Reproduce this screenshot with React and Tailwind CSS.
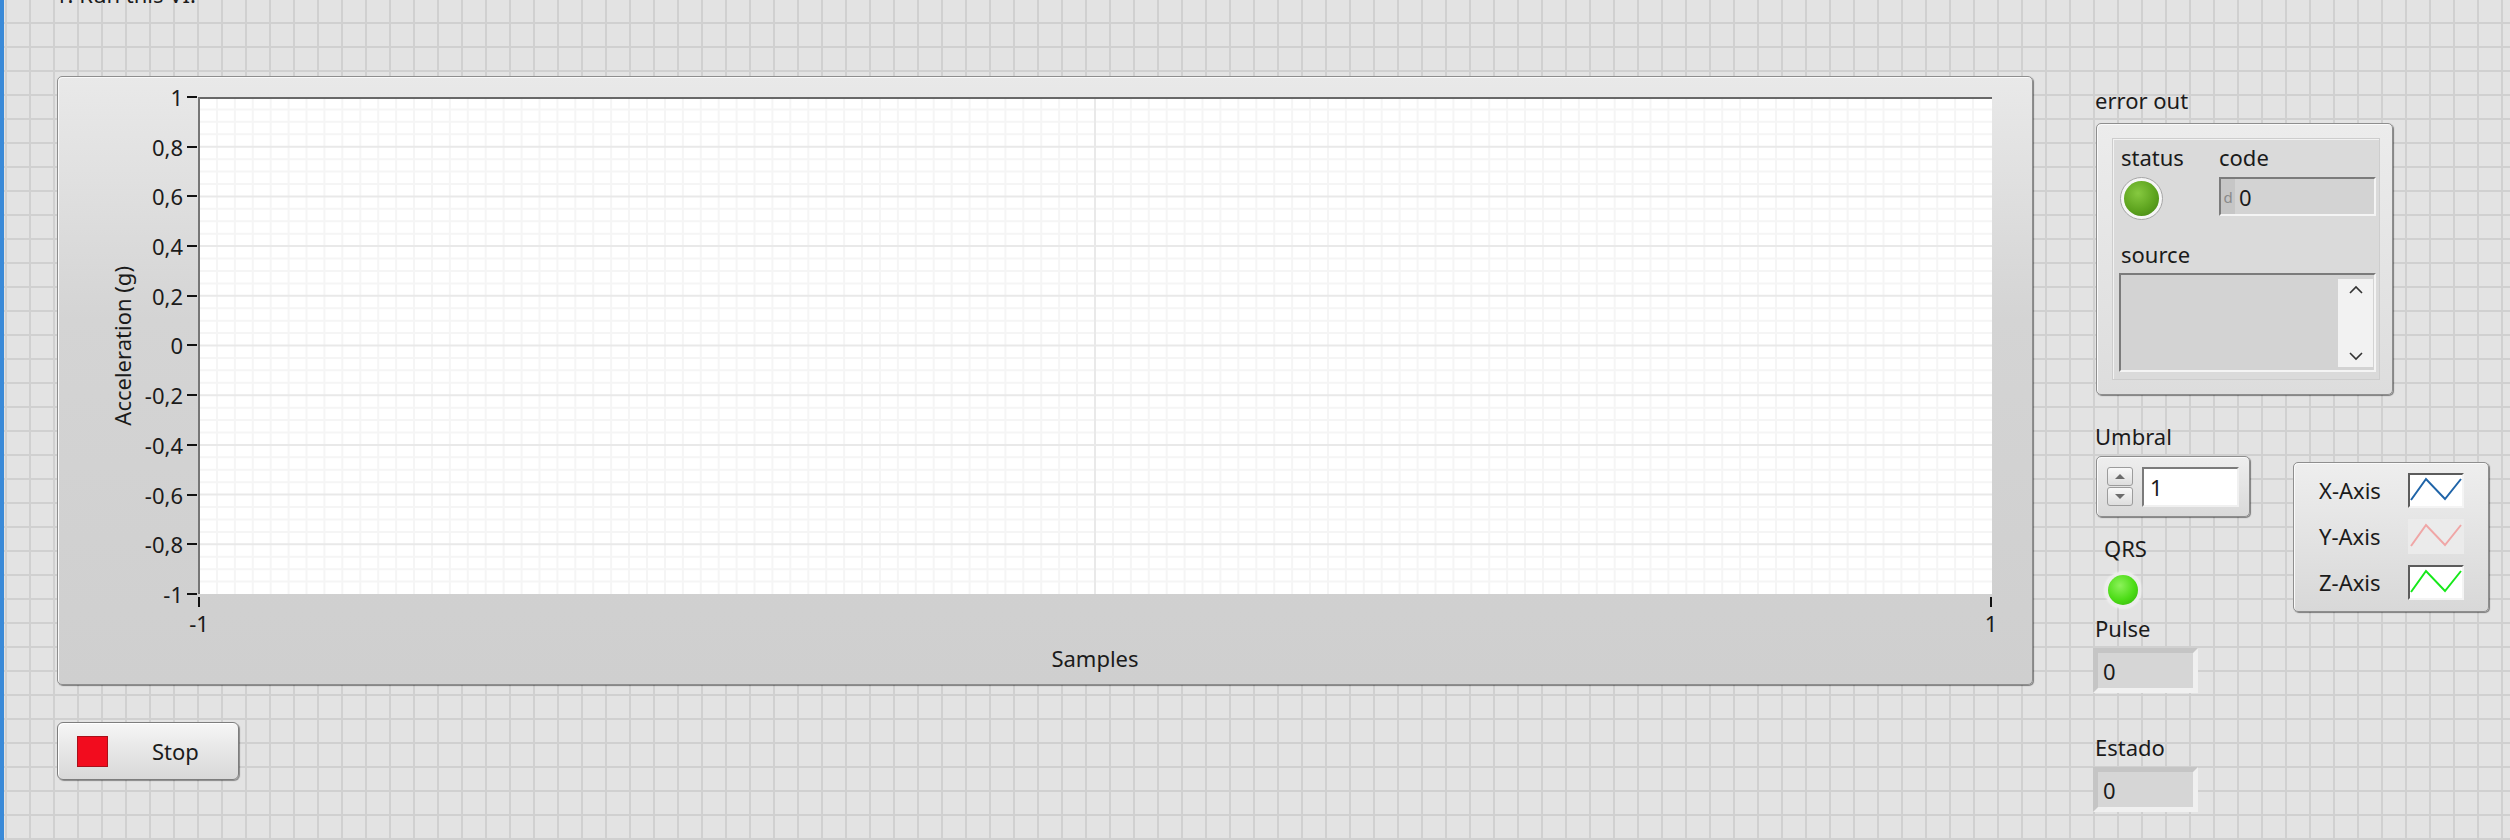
const yTicks = ["1", "0,8", "0,6", "0,4", "0,2", "0", "-0,2", "-0,4", "-0,6", "-0,8", "-1"];

function PlotGrid() {
  const W = 1794;
  const H = 497;
  const minorV = [];
  const minorH = [];
  const majorH = [];
  for (let i = 1; i < 100; i++) minorV.push(1 + (i * (W - 2)) / 100);
  for (let i = 1; i < 40; i++) if (i % 4) minorH.push((i * H) / 40);
  for (let i = 1; i < 10; i++) majorH.push((i * H) / 10);

  return (
    <svg width={W} height={H} className="block bg-white">
      {minorV.map((x) => (
        <line key={"v" + x} x1={x} x2={x} y1={0} y2={H} stroke="#f5f5f5" strokeWidth="2" />
      ))}
      {minorH.map((y) => (
        <line key={"h" + y} x1={0} x2={W} y1={y} y2={y} stroke="#f5f5f5" strokeWidth="2" />
      ))}
      {majorH.map((y) => (
        <line key={"m" + y} x1={0} x2={W} y1={y} y2={y} stroke="#e9e9e9" strokeWidth="2" />
      ))}
      <line x1={W / 2} x2={W / 2} y1={0} y2={H} stroke="#e9e9e9" strokeWidth="2" />
      <line x1={0} x2={W} y1={1} y2={1} stroke="#686868" strokeWidth="2" />
      <line x1={1} x2={1} y1={0} y2={H} stroke="#767676" strokeWidth="2" />
    </svg>
  );
}

function GraphPanel() {
  return (
    <div className="mt-[68px] w-[1976px] h-[609px] shrink-0 rounded-[5px] border border-[#8e8e8e] bg-[linear-gradient(to_bottom,#e9e9e9,#d4d4d4_40%,#cfcfcf)] shadow-[1px_1px_1px_rgba(0,0,0,0.45),inset_1px_1px_0_#fafafa] flex pt-[20px]">
      <div className="ml-[44px] w-[40px] h-[497px] flex items-center justify-center">
        <span className="[writing-mode:vertical-rl] rotate-180 whitespace-nowrap">Acceleration (g)</span>
      </div>
      <div className="w-[56px] h-[521px] -mt-[12px] flex flex-col justify-between">
        {yTicks.map((t) => (
          <div key={t} className="h-[24px] flex items-center justify-end">
            <span>{t}</span>
            <span className="ml-[4px] mr-[1px] w-[10px] h-[2px] bg-[#111]" />
          </div>
        ))}
      </div>
      <div className="w-[1794px] flex flex-col">
        <PlotGrid />
        <div className="mt-[3px] -mx-[11px] flex justify-between">
          {["-1", "1"].map((t) => (
            <div key={t} className="w-[24px] flex flex-col items-center">
              <span className="w-[2px] h-[10px] bg-[#111]" />
              <span className="mt-[2px]">{t}</span>
            </div>
          ))}
        </div>
        <div className="mt-[7px] text-center">Samples</div>
      </div>
    </div>
  );
}

function StopButton() {
  return (
    <div className="mt-[37px] w-[182px] h-[58px] rounded-[6px] border border-[#7d7d7d] bg-[linear-gradient(to_bottom,#f6f6f6,#e6e6e6_50%,#d8d8d8)] shadow-[1px_1px_1px_rgba(0,0,0,0.4),inset_1px_1px_0_#ffffff] flex items-center pl-[19px]">
      <div className="w-[31px] h-[31px] bg-[#f20c1e] border border-[#a8101a]" />
      <span className="ml-[44px]">Stop</span>
    </div>
  );
}

function Chevron({ up }) {
  return (
    <svg width="16" height="10" viewBox="0 0 16 10">
      <polyline
        points={up ? "2,8 8,2 14,8" : "2,2 8,8 14,2"}
        fill="none"
        stroke="#333"
        strokeWidth="1.6"
      />
    </svg>
  );
}

function ErrorCluster() {
  return (
    <div className="ml-[3px] mt-[9px] w-[297px] h-[272px] rounded-[5px] border border-[#8e8e8e] bg-[linear-gradient(to_bottom,#ececec,#dddddd)] shadow-[1px_1px_1px_rgba(0,0,0,0.45),inset_1px_1px_0_#fafafa] pt-[14px] pl-[15px]">
      <div className="w-[268px] h-[242px] bg-[#dadada] border border-[#cdcdcd] shadow-[inset_1px_1px_0_#f2f2f2] pt-[4px] pl-[6px]">
        <div className="flex">
          <div className="w-[100px] flex flex-col items-start">
            <span className="ml-[2px]">status</span>
            <div className="mt-[6px] ml-[1px] w-[43px] h-[43px] rounded-full bg-[#f6f6f6] border border-[#a6a6a6] p-[3px]">
              <div className="w-full h-full rounded-full bg-[radial-gradient(circle_at_40%_35%,#86c940,#5ea41f_55%,#417f12)]" />
            </div>
          </div>
          <div className="flex flex-col items-start">
            <span>code</span>
            <div className="mt-[6px] w-[157px] h-[39px] bg-[#d3d3d3] border-2 border-t-[#7b7b7b] border-l-[#7b7b7b] border-r-[#f4f4f4] border-b-[#f4f4f4] flex items-center">
              <span className="w-[14px] h-full bg-[#c6c6c6] text-[15px] text-[#8a8a8a] flex items-center justify-center">d</span>
              <span className="ml-[4px]">0</span>
            </div>
          </div>
        </div>
        <div className="mt-[20px] ml-[2px]">source</div>
        <div className="mt-[5px] w-[257px] h-[99px] bg-[#d3d3d3] border-2 border-t-[#7b7b7b] border-l-[#7b7b7b] border-r-[#f4f4f4] border-b-[#f4f4f4] flex justify-end pt-[4px] pr-[1px]">
          <div className="w-[35px] h-[88px] bg-[#f2f2f2] flex flex-col items-center justify-between py-[6px]">
            <Chevron up />
            <Chevron />
          </div>
        </div>
      </div>
    </div>
  );
}

function Indicator() {
  return (
    <div className="w-[105px] h-[45px] bg-[#d6d6d6] border-[5px] border-t-[#c5c5c5] border-l-[#c5c5c5] border-r-[#f0f0f0] border-b-[#f0f0f0] flex items-center pl-[5px]">
      0
    </div>
  );
}

function SpinButton({ up }) {
  return (
    <div className="h-[19px] rounded-[3px] border border-[#9c9c9c] bg-[linear-gradient(to_bottom,#f8f8f8,#dedede)] flex items-center justify-center">
      <svg width="12" height="7" viewBox="0 0 12 7">
        <polygon points={up ? "1,6 6,1 11,6" : "1,1 6,6 11,1"} fill="#6c6c6c" />
      </svg>
    </div>
  );
}

function Swatch({ color, framed }) {
  return (
    <div
      className={
        framed
          ? "w-[56px] h-[35px] bg-white border-2 border-t-[#5c5c5c] border-l-[#5c5c5c] border-r-[#f4f4f4] border-b-[#f4f4f4]"
          : "w-[56px] h-[35px] bg-[#ebebeb] border-2 border-[#ebebeb]"
      }
    >
      <svg width="52" height="31" viewBox="0 0 52 31" className="block">
        <polyline points="1,25 16,4 35,24 51,4" fill="none" stroke={color} strokeWidth="2" />
      </svg>
    </div>
  );
}

function Legend() {
  const rows = [
    { label: "X-Axis", color: "#1f64a8", framed: true },
    { label: "Y-Axis", color: "#f0a6a6", framed: false },
    { label: "Z-Axis", color: "#16e81a", framed: true },
  ];
  return (
    <div className="ml-[43px] mt-[40px] w-[196px] h-[150px] rounded-[5px] border border-[#8e8e8e] bg-[linear-gradient(to_bottom,#eeeeee,#d8d8d8)] shadow-[1px_1px_1px_rgba(0,0,0,0.45),inset_1px_1px_0_#fafafa] pt-[4px]">
      {rows.map((r) => (
        <div key={r.label} className="h-[46px] flex items-center pl-[25px]">
          <span className="w-[89px]">{r.label}</span>
          <Swatch color={r.color} framed={r.framed} />
        </div>
      ))}
    </div>
  );
}

export default function App() {
  return (
    <div className="w-[2510px] h-[840px] overflow-hidden flex bg-[#e3e3e3] [background-image:linear-gradient(to_right,#d0d0d0_2px,transparent_2px),linear-gradient(to_bottom,#d0d0d0_2px,transparent_2px)] [background-size:24px_24px] [background-position:5px_22px] font-['Noto_Sans',sans-serif] text-[#1b1b1b] text-[22px] leading-[28px]">
      <div className="w-[4px] shrink-0 bg-[#3a8ad8]" />

      <div className="ml-[53px] w-[1976px] shrink-0 flex flex-col items-start">
        <div className="-mt-[20px] -ml-[2px] h-[28px]">1. Run this VI.</div>
        <GraphPanel />
        <StopButton />
      </div>

      <div className="ml-[60px] pt-[86px] flex flex-col items-start">
        <div className="ml-[2px]">error out</div>
        <ErrorCluster />

        <div className="mt-[27px] flex items-start">
          <div className="w-[157px] flex flex-col items-start">
            <div className="ml-[2px]">Umbral</div>
            <div className="mt-[6px] ml-[3px] w-[154px] h-[61px] rounded-[5px] border border-[#8e8e8e] bg-[linear-gradient(to_bottom,#eeeeee,#d9d9d9)] shadow-[1px_1px_1px_rgba(0,0,0,0.45),inset_1px_1px_0_#fafafa] pt-[10px] pl-[10px] flex items-start">
              <div className="w-[26px] flex flex-col gap-[1px]">
                <SpinButton up />
                <SpinButton />
              </div>
              <div className="ml-[9px] w-[97px] h-[40px] bg-white border-2 border-t-[#7b7b7b] border-l-[#7b7b7b] border-r-[#f0f0f0] border-b-[#f0f0f0] flex items-center pl-[6px]">
                1
              </div>
            </div>
            <div className="mt-[17px] ml-[11px]">QRS</div>
            <div className="mt-[10px] ml-[12px] w-[36px] h-[36px] rounded-full bg-[#ececec] shadow-[0_0_3px_rgba(255,255,255,0.9)] p-[3px]">
              <div className="w-full h-full rounded-full bg-[radial-gradient(circle_at_40%_35%,#8cf25a,#4cdc16_55%,#2fae08)]" />
            </div>
            <div className="mt-[6px] ml-[2px]">Pulse</div>
            <div className="mt-[6px]">
              <Indicator />
            </div>
            <div className="mt-[40px] ml-[2px]">Estado</div>
            <div className="mt-[6px]">
              <Indicator />
            </div>
          </div>
          <Legend />
        </div>
      </div>
    </div>
  );
}
